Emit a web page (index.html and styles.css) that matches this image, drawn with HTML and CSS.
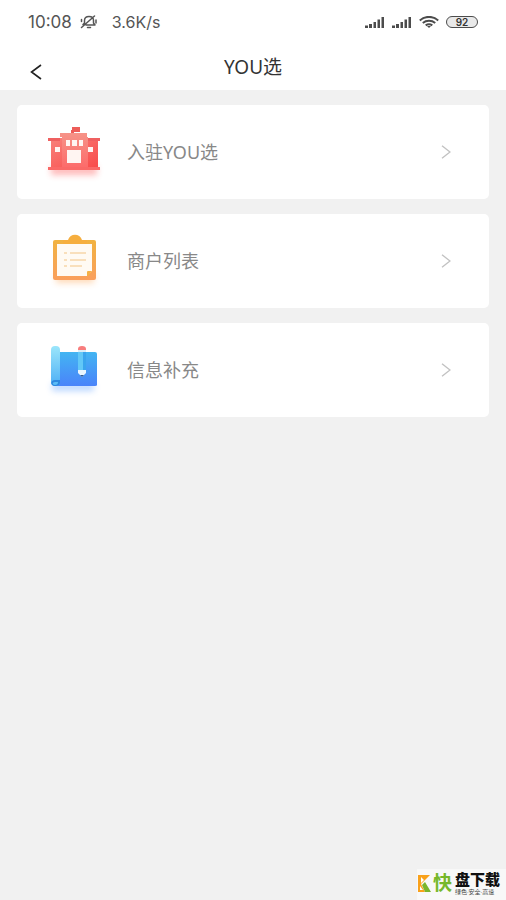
FILE: index.html
```html
<!DOCTYPE html>
<html lang="zh-CN">
<head>
<meta charset="utf-8">
<meta name="viewport" content="width=device-width, initial-scale=1">
<title>YOU选</title>
<link rel="stylesheet" href="styles.css">
</head>
<body>
<header class="top">
  <div class="status">
    <span>10:08</span>
    <svg class="mute" width="18" height="14" viewBox="0 0 18 14" fill="none" stroke="#555" stroke-width="1.500" stroke-linecap="round" stroke-linejoin="round">
      <path d="M3 9.500 4.500 8V5.500C4.500 3 6.500 1.500 9 1.500S13.500 3 13.500 5.500V8l1.500 2H6M7.500 12.500h3M1.500 12.500 14.500 1M1.500 4.500v2M16 5v3"/>
    </svg>
    <span class="speed">3.6K/s</span>
    <span class="signals">
      <svg width="20" height="12" viewBox="0 0 20 12" fill="#4c4c4c"><path d="M0 9.500h3V12H0zM4 8h3v4H4zM8.500 6h2.500v6H8.500zM12.500 3.500H15V12h-2.500zM16.500 1H19v11h-2.500z"/></svg>
      <svg width="20" height="12" viewBox="0 0 20 12" fill="#4c4c4c"><path d="M0 9.500h3V12H0zM4 8h3v4H4zM8.500 6h2.500v6H8.500zM12.500 3.500H15V12h-2.500zM16.500 1H19v11h-2.500z"/></svg>
      <svg width="20" height="12" viewBox="0 0 20 12" fill="none" stroke="#4c4c4c" stroke-width="2"><path d="M.8 4.400C6-.3 14-.3 19.200 4.400M3.800 7c3.500-3 8.900-3 12.400 0M6.700 9.400c2-1.500 4.600-1.500 6.600 0"/><path d="M8 10h4l-2 2z" fill="#4c4c4c" stroke="none"/></svg>
      <span class="battery">92</span>
    </span>
  </div>
  <div class="nav">
    <button class="back" type="button" aria-label="返回">
      <svg width="12" height="16" viewBox="0 0 12 16" fill="none" stroke="#222" stroke-width="1.600"><path d="M11 1 1.500 8 11 15"/></svg>
    </button>
    <h1>YOU选</h1>
  </div>
</header>

<main class="list">
  <a class="card" href="#join">
    <svg class="icon" width="64" height="60" viewBox="0 -4 64 60">
      <defs>
        <linearGradient id="red" x1="0" y1="0" x2="1" y2="1"><stop offset="0" stop-color="#f8837c"/><stop offset="1" stop-color="#f94747"/></linearGradient>
        <linearGradient id="redMid" x1="0" y1="0" x2="0" y2="1"><stop offset="0" stop-color="#f69388"/><stop offset="1" stop-color="#fd6868"/></linearGradient>
        <filter id="soft" x="-30%" y="-80%" width="160%" height="260%"><feGaussianBlur stdDeviation="3"/></filter>
      </defs>
      <rect x="9" y="40" width="46" height="9" fill="#ff6262" opacity=".45" filter="url(#soft)"/>
      <path d="M6 12h52v3h-2v26h2v3H6v-3h3V15H6z" fill="url(#red)"/>
      <path d="M18 11V7h27v4h1v33H20V11z" fill="url(#redMid)"/>
      <path d="M29 4h3v3h-3z" fill="#ed5d59"/>
      <path d="M30 1h8v5h-8z" fill="#ed5d59"/>
      <path d="M6 12h12v3H6zM46 12h12v3H46z" fill="#ef6060"/>
      <path d="M6 41h52v3H6z" fill="#fa6967"/>
      <path d="M25 24h14v13H25zM24 14h4v6h-4zM30 14h5v6h-5zM37 14h4v6h-4zM13 21h5v5h-5zM46 21h5v5h-5z" fill="#fff5f2"/>
    </svg>
    <span class="label">入驻YOU选</span>
    <svg class="arrow" width="10" height="14" viewBox="0 0 10 14" fill="none" stroke="#c2c2c2" stroke-width="1.400"><path d="M1 .8 9 7 1 13.200"/></svg>
  </a>
  <a class="card" href="#merchants">
    <svg class="icon" width="64" height="60" viewBox="-1 -2 64 60">
      <defs>
        <linearGradient id="orange" x1="0" y1="0" x2="0" y2="1"><stop offset="0" stop-color="#f1b341"/><stop offset="1" stop-color="#fa9f5c"/></linearGradient>
      </defs>
      <rect x="13" y="40" width="38" height="10" fill="#ffad62" opacity=".45" filter="url(#soft)"/>
      <rect x="10" y="7" width="43" height="40" rx="2" fill="url(#orange)"/>
      <path d="M14 11h35v27l-5 5H14z" fill="#fffaf3"/>
      <path d="M49 38h-4q-1 0-1 1v4h1z" fill="#f4b145"/>
      <path d="M20 11V7h5c2-7 12-7 14 0h5v4z" fill="#f6ae3e"/>
      <path d="M21 20h3M27 20h16M21 27h3M27 27h16M21 33h3M27 33h12" stroke="#f9dfbb" stroke-width="2"/>
    </svg>
    <span class="label">商户列表</span>
    <svg class="arrow" width="10" height="14" viewBox="0 0 10 14" fill="none" stroke="#c2c2c2" stroke-width="1.400"><path d="M1 .8 9 7 1 13.200"/></svg>
  </a>
  <a class="card" href="#info">
    <svg class="icon" width="64" height="60" viewBox="0 -5 64 60">
      <defs>
        <linearGradient id="blue" x1="0" y1="0" x2="0" y2="1"><stop offset="0" stop-color="#43b5f2"/><stop offset="1" stop-color="#4a83fa"/></linearGradient>
        <linearGradient id="roll" x1="0" y1="0" x2="0" y2="1"><stop offset="0" stop-color="#9be6fb"/><stop offset="1" stop-color="#4caef5"/></linearGradient>
      </defs>
      <rect x="10" y="38" width="42" height="8" fill="#5a9cff" opacity=".4" filter="url(#soft)"/>
      <path d="M12 7h41q2 0 2 2v31q0 1-2 1H12z" fill="url(#blue)"/>
      <rect x="9" y="1" width="9" height="40" rx="4" fill="url(#roll)"/>
      <path d="M13 41c-5 0-5-6 0-6h5v2c0 3-2 4-5 4z" fill="#2e88df"/>
      <path d="M13 40c-3 0-3-3 0-3h3c0 2-1 3-3 3z" fill="#5bbcf7"/>
      <path d="M36 5h8v21h-8z" fill="#3aa5ee"/>
      <path d="M36 5h5v21h-5z" fill="#62c8f7"/>
      <path d="M36 5V4q0-3 4-3t4 3v1z" fill="#f87d7d"/>
      <path d="M36 5h8v2h-8z" fill="#d9edf8"/>
      <path d="M36 25h8v3l-4 4-4-4z" fill="#eaf6ff"/>
      <path d="M38 30h4l-2 2z" fill="#335b91"/>
    </svg>
    <span class="label">信息补充</span>
    <svg class="arrow" width="10" height="14" viewBox="0 0 10 14" fill="none" stroke="#c2c2c2" stroke-width="1.400"><path d="M1 .8 9 7 1 13.200"/></svg>
  </a>
</main>

<aside class="mark">
  <svg width="13" height="17" viewBox="0 0 13 17"><path d="M0 0h12L3 9l4 8H0z" fill="#f9a11b"/><path d="m7 7 6 10H7L4 10z" fill="#7bb52c"/><path d="M3 2v6l3-3zM2 11v4h3z" fill="#fff"/></svg>
  <span class="mark-kuai">快</span>
  <span class="mark-text"><b>盘下载</b><small>绿色·安全·高速</small></span>
</aside>
</body>
</html>
```
FILE: styles.css
```css
* {
  box-sizing: border-box;
}

body {
  margin: 0;
  min-height: 100vh;
  display: flex;
  flex-direction: column;
  background: #f1f1f1;
  font-family: "Noto Sans", "Noto Sans CJK SC", sans-serif;
}

.top {
  background: #fff;
}

.status {
  display: flex;
  align-items: center;
  height: 44px;
  padding: 0 28px;
  color: #555;
  font-family: Inter, sans-serif;
  font-size: 17px;
}

.mute {
  margin-left: 8px;
}

.speed {
  margin-left: 14px;
  font-size: 16px;
}

.signals {
  display: flex;
  align-items: center;
  gap: 7px;
  margin-left: auto;
}

.battery {
  width: 32px;
  height: 12px;
  border: 1px solid #4c4c4c;
  border-radius: 6px;
  background: #e9e9e9;
  color: #333;
  font-size: 10px;
  font-weight: 600;
  line-height: 10px;
  text-align: center;
}

.nav {
  display: grid;
  grid-template-columns: 1fr auto 1fr;
  align-items: center;
  height: 46px;
  padding: 0 28px;
}

.back {
  display: flex;
  justify-self: start;
  padding: 10px 2px 0;
  border: 0;
  background: none;
}

h1 {
  margin: 0;
  color: #333;
  font-size: 19px;
  font-weight: 400;
  line-height: 28px;
}

.list {
  display: flex;
  flex-direction: column;
  gap: 15px;
  padding: 15px 17px;
}

.card {
  display: flex;
  align-items: center;
  height: 94px;
  padding: 0 38px 0 25px;
  border-radius: 5px;
  background: #fff;
  text-decoration: none;
}

.label {
  flex: 1;
  margin-left: 21px;
  color: #888;
  font-size: 18px;
  line-height: 26px;
}

.mark {
  display: flex;
  align-items: center;
  gap: 2px;
  width: 89px;
  height: 31px;
  margin: auto 0 0 auto;
  padding: 0 0 3px 1px;
  background: #f8f8f8;
}

.mark svg {
  flex: none;
}

.mark-kuai {
  color: #76b82a;
  font-size: 19px;
  font-weight: 700;
  line-height: 24px;
}

.mark-text {
  display: flex;
  flex-direction: column;
  margin-left: 1px;
  color: #111;
}

.mark-text b {
  font-size: 15px;
  font-weight: 900;
  line-height: 17px;
}

.mark-text small {
  color: #444;
  font-size: 6px;
  line-height: 8px;
  white-space: nowrap;
}
```
